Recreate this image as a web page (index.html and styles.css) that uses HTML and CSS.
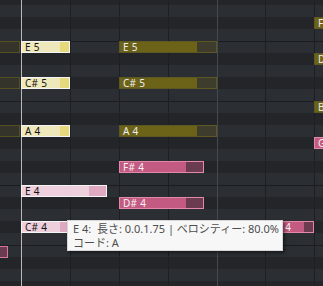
FILE: index.html
```html
<!DOCTYPE html>
<html lang="ja">
<head>
    <meta charset="UTF-8">
    <title>Piano Roll</title>
    <link rel="stylesheet" href="styles.css">
</head>
<body>
    <div class="roll">
        <!-- key rows, G#5 down to G#3 -->
        <div class="rows">
            <div class="row black"></div>
            <div class="row white"></div>
            <div class="row black"></div>
            <div class="row white"></div>
            <div class="row white edge"></div>
            <div class="row black"></div>
            <div class="row white"></div>
            <div class="row black"></div>
            <div class="row white"></div>
            <div class="row white edge"></div>
            <div class="row black"></div>
            <div class="row white"></div>
            <div class="row black"></div>
            <div class="row white"></div>
            <div class="row black"></div>
            <div class="row white"></div>
            <div class="row white edge"></div>
            <div class="row black"></div>
            <div class="row white"></div>
            <div class="row black"></div>
            <div class="row white"></div>
            <div class="row white edge"></div>
            <div class="row black"></div>
            <div class="row white"></div>
            <div class="row black"></div>
        </div>

        <div class="vline" style="left: 70px"></div>
        <div class="vline" style="left: 119px"></div>
        <div class="vline" style="left: 168px"></div>
        <div class="vline bar" style="left: 217px"></div>
        <div class="vline" style="left: 265px"></div>
        <div class="vline" style="left: 314px"></div>
        <div class="vline cursor" style="left: 21px"></div>

        <!-- ghost notes on the left edge -->
        <div class="note ghost" style="left: -30px; top: 41px; width: 50px"></div>
        <div class="note ghost" style="left: -30px; top: 77px; width: 50px"></div>
        <div class="note ghost" style="left: -30px; top: 125px; width: 50px"></div>
        <div class="note ghost-pink" style="left: -40px; top: 246px; width: 48px"></div>

        <!-- selected notes -->
        <div class="note sel-olive" style="left: 21px; top: 41px; width: 49px">E 5</div>
        <div class="note sel-olive" style="left: 21px; top: 77px; width: 49px">C# 5</div>
        <div class="note sel-olive" style="left: 21px; top: 125px; width: 49px">A 4</div>
        <div class="note sel-pink" style="left: 21px; top: 185px; width: 86px">E 4</div>
        <div class="note sel-pink" style="left: 21px; top: 221px; width: 49px">C# 4</div>

        <!-- other notes -->
        <div class="note olive" style="left: 119px; top: 41px; width: 98px">E 5</div>
        <div class="note olive" style="left: 119px; top: 77px; width: 98px">C# 5</div>
        <div class="note olive" style="left: 119px; top: 125px; width: 98px">A 4</div>
        <div class="note pink" style="left: 119px; top: 161px; width: 85px">F# 4</div>
        <div class="note pink" style="left: 119px; top: 197px; width: 85px">D# 4</div>
        <div class="note pink" style="left: 265px; top: 221px; width: 49px">C# 4</div>

        <div class="note olive" style="left: 314px; top: 17px; width: 49px">F# 5</div>
        <div class="note olive" style="left: 314px; top: 53px; width: 49px">D# 5</div>
        <div class="note olive" style="left: 314px; top: 101px; width: 49px">B 4</div>
        <div class="note pink" style="left: 314px; top: 137px; width: 49px">G# 4</div>

        <div class="tooltip">
            <div>E 4:&nbsp; 長さ: 0.0.1.75 | ベロシティー: 80.0%</div>
            <div>コード: A</div>
        </div>
    </div>
</body>
</html>
```

FILE: styles.css
```css
body {
    margin: 0;
    background-color: #2b2e33;
    overflow: hidden;
    font-family: 'Noto Sans', 'Noto Sans CJK JP', sans-serif;
}

.roll {
    position: relative;
    width: 323px;
    height: 286px;
    overflow: hidden;
}

/* Rows of the keyboard */
.rows {
    display: flex;
    flex-direction: column;
    margin-top: -7px;
}

.row {
    height: 12px;
    box-sizing: border-box;
    flex-shrink: 0;
}

.row.white {
    background: #2b2e33;
}

.row.black {
    background: #242528;
}

.row.edge {
    border-top: 1px solid #1b1c1f;
}

/* Grid lines */
.vline {
    position: absolute;
    top: 0;
    bottom: 0;
    width: 1px;
    background: #1e1f22;
}

.vline.bar {
    background: #45484d;
}

.vline.cursor {
    background: #b9b9b9;
}

/* Notes */
.note {
    position: absolute;
    height: 12px;
    box-sizing: border-box;
    border: 1px solid;
    padding-left: 3px;
    font-size: 10px;
    line-height: 10px;
    white-space: nowrap;
    overflow: hidden;
    letter-spacing: 0.3px;
}

.note.ghost {
    background: #35342a;
    border-color: #555022;
}

.note.ghost-pink {
    background: #6b3b50;
    border-color: #d5789d;
}

.note.sel-olive {
    background: linear-gradient(to right, #efe8bb 80%, #e6d97c 80%);
    border-color: #f4f4f4;
    color: #111;
}

.note.sel-pink {
    background: linear-gradient(to right, #eecfdc 80%, #e0a9c2 80%);
    border-color: #f4f4f4;
    color: #111;
}

.note.olive {
    background: linear-gradient(to right, #6c6319 80%, #3e3c2d 80%);
    border-color: #5d5722;
    color: #ececec;
}

.note.pink {
    background: linear-gradient(to right, #c35a81 80%, #6b3b4f 80%);
    border-color: #e488aa;
    color: #f4f4f4;
}

/* Tooltip */
.tooltip {
    position: absolute;
    left: 67px;
    top: 220px;
    width: 216px;
    height: 31px;
    box-sizing: border-box;
    padding: 1px 5px;
    background: #f7f7f7;
    border: 1px solid #d6d6d6;
    box-shadow: 2px 2px 3px rgba(0, 0, 0, 0.45);
    color: #4e4e4e;
    font-size: 11px;
    line-height: 14px;
    white-space: nowrap;
    overflow: hidden;
}
```
